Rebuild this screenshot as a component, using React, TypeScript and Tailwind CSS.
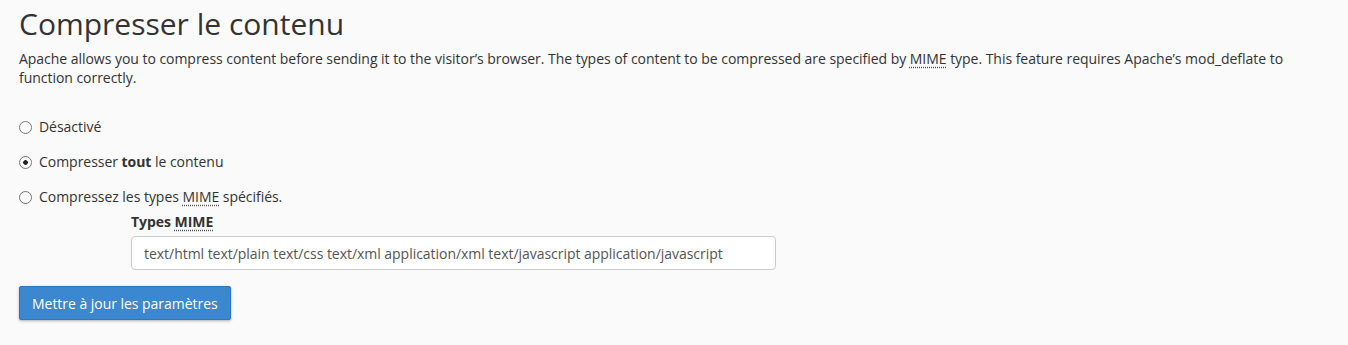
import React from "react";

const Mime = () => (
  <abbr
    title="Multipurpose Internet Mail Extensions"
    className="underline decoration-dotted decoration-[#555] underline-offset-[3px] cursor-help"
  >
    MIME
  </abbr>
);

interface Option {
  id: string;
  label: React.ReactNode;
}

export default function App() {
  const [mode, setMode] = React.useState("all");
  const options: Option[] = [
    { id: "disabled", label: "Désactivé" },
    {
      id: "all",
      label: (
        <>
          Compresser <b className="font-bold">tout</b> le contenu
        </>
      ),
    },
    {
      id: "some",
      label: (
        <>
          Compressez les types <Mime /> spécifiés.
        </>
      ),
    },
  ];

  return (
    <div
      className="min-h-[345px] bg-[#fafafa] text-[#333] px-[19px] pt-[7px] tracking-[-0.035px]"
      style={{ fontFamily: '"Open Sans", sans-serif' }}
    >
      <h1 className="text-[30px] leading-[33px] font-normal tracking-normal">Compresser le contenu</h1>
      <p className="text-[14px] leading-[19px] mt-[9px]">
        Apache allows you to compress content before sending it to the visitor’s browser. The types of
        content to be compressed are specified by <Mime /> type. This feature requires Apache’s
        mod_deflate to function correctly.
      </p>

      <div className="mt-[30px] flex flex-col gap-[15px] text-[14px] leading-[20px]">
        {options.map((opt) => (
          <label key={opt.id} className="flex items-center gap-[7px] cursor-pointer">
            <input
              type="radio"
              name="deflate"
              checked={mode === opt.id}
              onChange={() => setMode(opt.id)}
              className="m-0 w-[13px] h-[13px] shrink-0 appearance-none rounded-full border border-[#767676] bg-white checked:bg-[radial-gradient(circle,#222_0,#222_2px,#fff_2.6px)]"
            />
            <span>{opt.label}</span>
          </label>
        ))}
      </div>

      <div className="ml-[112px] mt-[5px] text-[14px]">
        <div className="font-bold leading-[20px]">
          Types <Mime />
        </div>
        <input
          type="text"
          defaultValue="text/html text/plain text/css text/xml application/xml text/javascript application/javascript"
          className="mt-[4px] w-[645px] h-[34px] px-[12px] rounded-[4px] border border-[#ccc] bg-white text-[#555] text-[14px] tracking-[-0.035px] outline-none"
          style={{ fontFamily: '"Open Sans", sans-serif' }}
        />
      </div>

      <button
        type="button"
        className="mt-[16px] h-[34px] px-[12px] rounded-[2px] border border-[#2e77bb] bg-[#3b88d0] text-white text-[14px] shadow-[0_1px_3px_rgba(0,0,0,0.3)]"
      >
        Mettre à jour les paramètres
      </button>
    </div>
  );
}
